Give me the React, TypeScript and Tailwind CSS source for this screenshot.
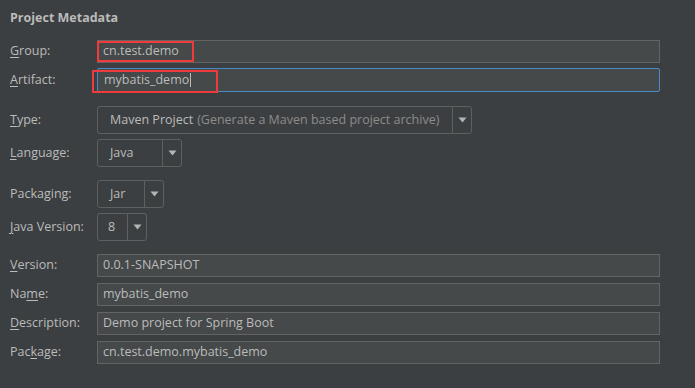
import React from 'react';

const font = { fontFamily: '"Open Sans", "Noto Sans", Arial, sans-serif' };

function Label({ pre, u, post }: { pre?: string; u: string; post: string }) {
  return (
    <div className="w-[87px] shrink-0 text-[12.5px] text-[#bbbbbb]">
      {pre}
      <span className="underline underline-offset-2">{u}</span>
      {post}
    </div>
  );
}

function Arrow() {
  return (
    <svg width="9" height="6" viewBox="0 0 9 6" className="block">
      <path d="M0.5 0.5 L8.5 0.5 L4.5 5.5 Z" fill="#b4b4b4" />
    </svg>
  );
}

function Combo({ width, children, arrowW = 19 }: { width: number; children: React.ReactNode; arrowW?: number }) {
  return (
    <div
      className="flex h-[28px] items-stretch rounded-[3px] border border-[#5e6060] bg-[#3c3f41]"
      style={{ width }}
    >
      <div className="flex flex-1 items-center pl-[12px] text-[12.5px] text-[#bbbbbb] whitespace-nowrap">{children}</div>
      <div className="flex items-center justify-center border-l border-[#5e6060]" style={{ width: arrowW }}>
        <Arrow />
      </div>
    </div>
  );
}

function Field({ value }: { value: string }) {
  return (
    <div className="flex h-[23px] w-[563px] items-center border border-[#646464] bg-[#45494a] pl-[5px] text-[12.5px] text-[#bbbbbb]">
      {value}
    </div>
  );
}

export default function App() {
  return (
    <div className="h-[388px] w-[695px] overflow-hidden bg-[#3c3f41] px-[10px]" style={font}>
      <div className="h-[40px] pt-[9px] text-[12.5px] font-bold text-[#bbbbbb]">Project Metadata</div>

      <div className="flex items-center">
        <Label u="G" post="roup:" />
        <div className="relative">
          <Field value="cn.test.demo" />
          <div className="absolute left-0 top-[1px] h-[21px] w-[97px] border-2 border-[#ef3b3b]" />
        </div>
      </div>

      <div className="mt-[5px] flex items-center">
        <Label u="A" post="rtifact:" />
        <div className="relative">
          <div className="flex h-[24px] w-[563px] items-center rounded-[2px] border border-[#4a88c7] bg-[#45494a] pl-[6px] text-[12.5px] text-[#bbbbbb]">
            mybatis_demo
            <span className="ml-[1px] inline-block h-[14px] w-px bg-[#bbbbbb]" />
          </div>
          <div className="absolute left-[-5px] top-[2px] h-[23px] w-[126px] border-2 border-[#ef3b3b]" />
        </div>
      </div>

      <div className="mt-[14px] flex items-center">
        <Label u="T" post="ype:" />
        <Combo width={375}>
          Maven Project<span className="ml-[4px] text-[#8c8c8c]">(Generate a Maven based project archive)</span>
        </Combo>
      </div>

      <div className="mt-[5px] flex items-center">
        <Label u="L" post="anguage:" />
        <Combo width={85}>Java</Combo>
      </div>

      <div className="mt-[13px] flex items-center">
        <Label pre="Packa" u="g" post="ing:" />
        <Combo width={67}>Jar</Combo>
      </div>

      <div className="mt-[5px] flex items-center">
        <Label u="J" post="ava Version:" />
        <Combo width={50}>
          <span className="-ml-[2px]">8</span>
        </Combo>
      </div>

      <div className="mt-[13px] flex items-center">
        <Label u="V" post="ersion:" />
        <Field value="0.0.1-SNAPSHOT" />
      </div>

      <div className="mt-[6px] flex items-center">
        <Label pre="Na" u="m" post="e:" />
        <Field value="mybatis_demo" />
      </div>

      <div className="mt-[6px] flex items-center">
        <Label u="D" post="escription:" />
        <Field value="Demo project for Spring Boot" />
      </div>

      <div className="mt-[6px] flex items-center">
        <Label pre="Pac" u="k" post="age:" />
        <Field value="cn.test.demo.mybatis_demo" />
      </div>
    </div>
  );
}
